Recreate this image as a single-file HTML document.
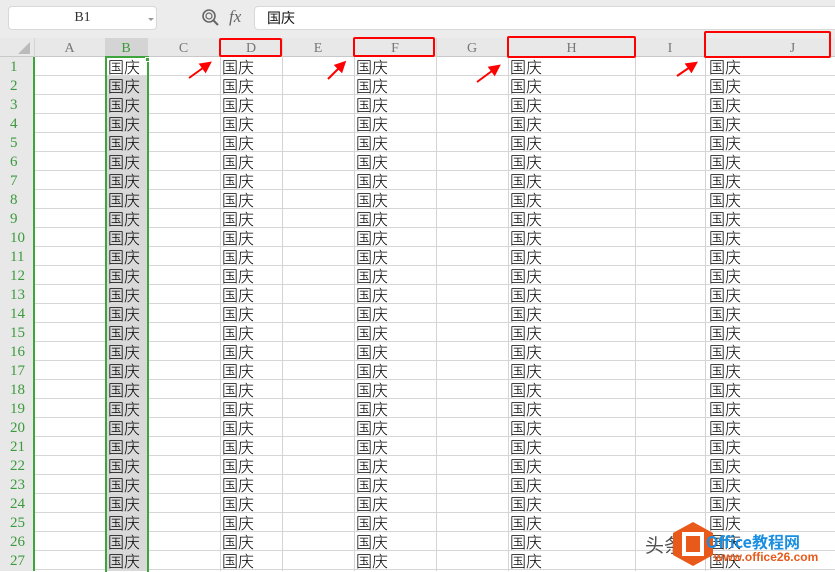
<!DOCTYPE html>
<html><head><meta charset="utf-8"><style>
*{margin:0;padding:0;box-sizing:border-box}
body{width:835px;height:571px;overflow:hidden;background:#fff;position:relative;font-family:"Liberation Serif","Noto Serif CJK SC",serif}
.a{position:absolute}
.tb{left:0;top:0;width:835px;height:38px;background:#ececec}
.nb{left:8px;top:6px;width:149px;height:24px;background:#fff;border:1px solid #d8d8d8;border-radius:4px;font-size:14px;text-align:center;line-height:22px;color:#333}
.fb{left:254px;top:6px;width:590px;height:24px;background:#fff;border:1px solid #d8d8d8;border-radius:4px;font-size:14px;line-height:22px;padding-left:12px;font-family:"Noto Sans CJK SC",sans-serif;color:#111}
.hd{left:0;top:38px;width:835px;height:19px;background:#e8e8e8;border-bottom:1px solid #c8c8c8}
.rh{left:0;top:57px;width:34px;height:514px;background:#e8e8e8}
.grid{left:34px;top:57px;width:801px;height:514px;background:repeating-linear-gradient(to bottom,transparent 0,transparent 18px,#d6d6d6 18px,#d6d6d6 19px)}
.vl{top:38px;width:1px;height:533px;background:#d4d4d4}
.hl{top:39px;height:19px;line-height:19px;text-align:center;font-size:14px;color:#777}
.col{top:57px;font-family:"Noto Sans CJK SC",sans-serif;font-size:16px;line-height:19px;color:#000;white-space:pre;font-weight:300}
.rn{top:58px;left:0;width:34px;font-size:15px;line-height:19px;color:#3b9a3b;white-space:pre;padding-left:10px}
.rb{border:2px solid #ff0000;border-radius:2px}
</style></head><body>
<div class="a tb"></div>
<div class="a nb">B1</div>
<div class="a" style="left:148px;top:18px;width:0;height:0;border-left:3px solid transparent;border-right:3px solid transparent;border-top:3px solid #999"></div>
<svg class="a" style="left:200px;top:8px" width="22" height="20"><circle cx="9" cy="8" r="6" fill="none" stroke="#666" stroke-width="1.6"/><circle cx="9" cy="8" r="3" fill="none" stroke="#666" stroke-width="1.2"/><line x1="13" y1="12" x2="18" y2="17" stroke="#666" stroke-width="2"/></svg>
<div class="a" style="left:229px;top:7px;font-size:17px;font-style:italic;color:#666">fx</div>
<div class="a fb">国庆</div>
<div class="a hd"></div>
<div class="a" style="left:105px;top:38px;width:43px;height:19px;background:#d4d4d4"></div>
<svg class="a" style="left:18px;top:42px" width="12" height="12"><polygon points="12,0 12,12 0,12" fill="#bbb"/></svg>
<div class="a rh"></div>
<div class="a grid"></div>
<div class="a" style="left:105px;top:76px;width:43px;height:495px;background:#d9d9d9"></div>
<div class="a vl" style="left:34px"></div><div class="a vl" style="left:105px"></div><div class="a vl" style="left:147px"></div><div class="a vl" style="left:220px"></div><div class="a vl" style="left:282px"></div><div class="a vl" style="left:354px"></div><div class="a vl" style="left:436px"></div><div class="a vl" style="left:508px"></div><div class="a vl" style="left:635px"></div><div class="a vl" style="left:705px"></div>
<div class="a hl" style="left:34px;width:71px">A</div>
<div class="a hl" style="left:105px;width:42px;color:#3b9a3b">B</div>
<div class="a hl" style="left:147px;width:73px">C</div>
<div class="a hl" style="left:220px;width:62px">D</div>
<div class="a hl" style="left:282px;width:72px">E</div>
<div class="a hl" style="left:354px;width:82px">F</div>
<div class="a hl" style="left:436px;width:72px">G</div>
<div class="a hl" style="left:508px;width:127px">H</div>
<div class="a hl" style="left:635px;width:70px">I</div>
<div class="a hl" style="left:705px;width:130px;padding-left:45px">J</div>
<div class="a rn">1
2
3
4
5
6
7
8
9
10
11
12
13
14
15
16
17
18
19
20
21
22
23
24
25
26
27</div>
<div class="a" style="left:33px;top:57px;width:2px;height:514px;background:#3ea53e"></div>
<div class="a col" style="left:108px">国庆
国庆
国庆
国庆
国庆
国庆
国庆
国庆
国庆
国庆
国庆
国庆
国庆
国庆
国庆
国庆
国庆
国庆
国庆
国庆
国庆
国庆
国庆
国庆
国庆
国庆
国庆</div>
<div class="a col" style="left:222px">国庆
国庆
国庆
国庆
国庆
国庆
国庆
国庆
国庆
国庆
国庆
国庆
国庆
国庆
国庆
国庆
国庆
国庆
国庆
国庆
国庆
国庆
国庆
国庆
国庆
国庆
国庆</div>
<div class="a col" style="left:356px">国庆
国庆
国庆
国庆
国庆
国庆
国庆
国庆
国庆
国庆
国庆
国庆
国庆
国庆
国庆
国庆
国庆
国庆
国庆
国庆
国庆
国庆
国庆
国庆
国庆
国庆
国庆</div>
<div class="a col" style="left:510px">国庆
国庆
国庆
国庆
国庆
国庆
国庆
国庆
国庆
国庆
国庆
国庆
国庆
国庆
国庆
国庆
国庆
国庆
国庆
国庆
国庆
国庆
国庆
国庆
国庆
国庆
国庆</div>
<div class="a col" style="left:709px">国庆
国庆
国庆
国庆
国庆
国庆
国庆
国庆
国庆
国庆
国庆
国庆
国庆
国庆
国庆
国庆
国庆
国庆
国庆
国庆
国庆
国庆
国庆
国庆
国庆
国庆
国庆</div>
<div class="a" style="left:105px;top:56px;width:44px;height:516px;border:2px solid #3ea53e;border-bottom:none"></div>
<div class="a" style="left:145px;top:57px;width:5px;height:5px;background:#3ea53e;border:1px solid #fff"></div>
<div class="a rb" style="left:219px;top:38px;width:63px;height:19px"></div>
<div class="a rb" style="left:353px;top:37px;width:82px;height:20px"></div>
<div class="a rb" style="left:507px;top:36px;width:129px;height:22px"></div>
<div class="a rb" style="left:704px;top:31px;width:127px;height:27px"></div>
<svg class="a" style="left:0;top:0" width="835" height="571">
<defs><marker id="h" markerWidth="6" markerHeight="6" refX="3" refY="3" orient="auto"><polygon points="0,0 6,3 0,6" fill="#f00"/></marker></defs>
<g stroke="#f00" stroke-width="2" marker-end="url(#h)">
<line x1="189" y1="78" x2="207" y2="65"/>
<line x1="328" y1="79" x2="342" y2="65"/>
<line x1="477" y1="82" x2="496" y2="68"/>
<line x1="677" y1="76" x2="693" y2="65"/>
</g></svg>
<div class="a" style="left:645px;top:531px;font-family:'Noto Sans CJK SC',sans-serif;font-size:19px;color:#333;opacity:.85">头条</div>
<svg class="a" style="left:670px;top:520px" width="46" height="48"><polygon points="23,2 43,13 43,35 23,46 3,35 3,13" fill="#e8591a"/><rect x="14" y="14" width="18" height="20" fill="none" stroke="#fff" stroke-width="4"/></svg>
<div class="a" style="left:706px;top:529px;font-family:'Noto Sans CJK SC',sans-serif;font-size:16px;font-weight:bold;color:#1a8ee0">Office教程网</div>
<div class="a" style="left:714px;top:550px;font-family:'Liberation Sans',sans-serif;font-size:12px;font-weight:bold;color:#e8591a">www.office26.com</div>
</body></html>
